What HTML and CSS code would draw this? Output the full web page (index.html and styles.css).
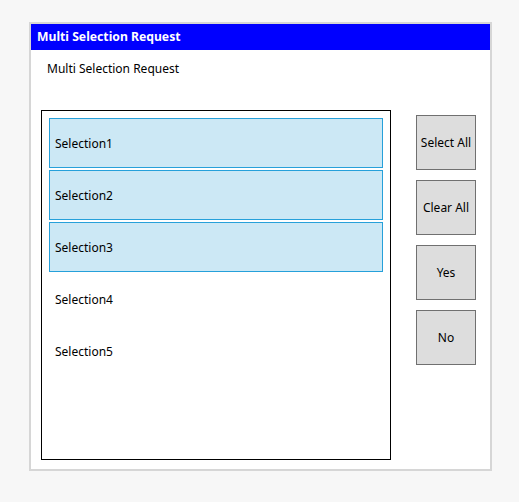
FILE: index.html
```html
<!DOCTYPE html>
<html>
<head>
<meta charset="utf-8">
<link rel="stylesheet" href="styles.css">
</head>
<body>
<div class="window">
  <div class="titlebar">Multi Selection Request</div>
  <div class="body">
    <div class="prompt">Multi Selection Request</div>
    <div class="main">
      <div class="listbox">
        <div class="item selected">Selection1</div>
        <div class="item selected">Selection2</div>
        <div class="item selected">Selection3</div>
        <div class="item">Selection4</div>
        <div class="item">Selection5</div>
      </div>
      <div class="buttons">
        <button class="btn">Select All</button>
        <button class="btn">Clear All</button>
        <button class="btn">Yes</button>
        <button class="btn">No</button>
      </div>
    </div>
  </div>
</div>
</body>
</html>
```
FILE: styles.css
```css
html, body {
  margin: 0;
  padding: 0;
  background: #f7f7f7;
  font-family: "Noto Sans", "Open Sans", sans-serif;
  color: #000;
}
body {
  padding: 22px 0 0 29px;
}
.window {
  width: 459px;
  height: 445px;
  border: 2px solid #d6d6d6;
  box-shadow: 0 1px 0 #9a9a9a;
  background: #fff;
  display: flex;
  flex-direction: column;
}
.titlebar {
  height: 26px;
  background: #0000ff;
  color: #fff;
  font-weight: bold;
  font-size: 12.2px;
  line-height: 26px;
  padding-left: 6px;
  box-sizing: border-box;
}
.body {
  padding: 0 0 0 10px;
  flex: 1;
}
.prompt {
  font-size: 12px;
  padding: 10px 0 0 6px;
  height: 60px;
  box-sizing: border-box;
  line-height: 17px;
}
.main {
  display: flex;
  align-items: flex-start;
  gap: 25px;
}
.listbox {
  width: 334px;
  height: 334px;
  border: 1px solid #000;
  padding: 7px;
  display: flex;
  flex-direction: column;
  gap: 2px;
}
.item {
  height: 50px;
  flex: none;
  box-sizing: border-box;
  border: 1px solid transparent;
  padding-left: 5px;
  font-size: 12px;
  display: flex;
  align-items: center;
}
.item.selected {
  background: #cce8f5;
  border-color: #26a0da;
}
.buttons {
  display: flex;
  flex-direction: column;
  gap: 10px;
  padding-top: 5px;
}
.btn {
  width: 60px;
  height: 55px;
  background: #dddddd;
  border: 1px solid #707070;
  font-family: "Noto Sans", "Open Sans", sans-serif;
  font-size: 12px;
  color: #000;
  padding: 0;
  margin: 0;
}
```
